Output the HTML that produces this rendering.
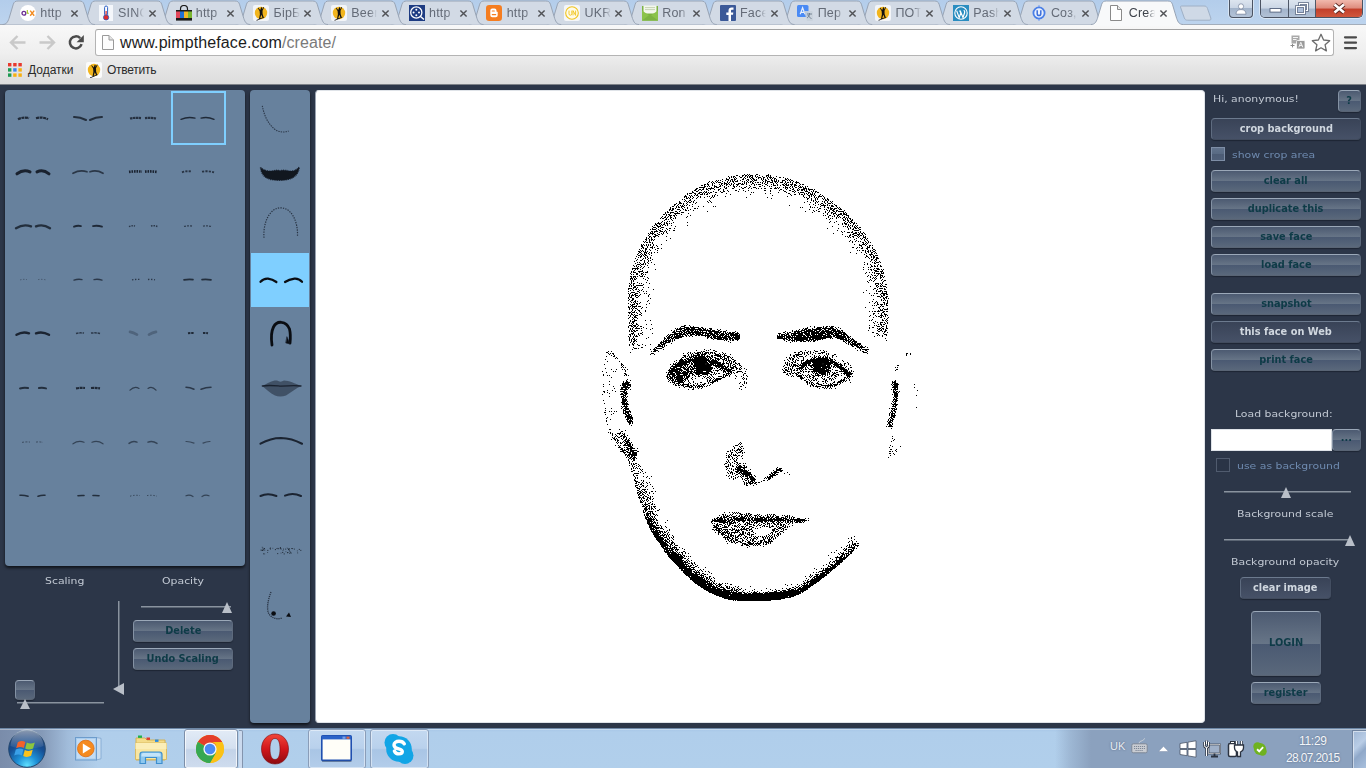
<!DOCTYPE html>
<html lang="en">
<head>
<meta charset="utf-8">
<title>Create</title>
<style>
*{box-sizing:border-box;margin:0;padding:0}
html,body{width:1366px;height:768px;overflow:hidden;background:#2c3648}
body{position:relative;font-family:"Liberation Sans","DejaVu Sans",sans-serif;font-size:12px;color:#222}
.abs{position:absolute}
/* ---------- chrome window ---------- */
#tabstrip{position:absolute;left:0;top:0;width:1366px;height:25px;background:linear-gradient(#b3cdeb,#bdd4ee)}
#toolbar{position:absolute;left:0;top:24px;width:1366px;height:61px;background:linear-gradient(#f8f8f8 0,#efefef 28px,#e4e4e4 44px,#dcdcdc 60px);border-top:1px solid #a3adba;border-bottom:1px solid #7d8187}
.tt{position:absolute;top:6px;font-size:12.500px;white-space:nowrap;width:26px;overflow:hidden;letter-spacing:.2px;-webkit-mask-image:linear-gradient(90deg,#000 70%,transparent 100%);mask-image:linear-gradient(90deg,#000 70%,transparent 100%)}
#omni{position:absolute;left:95px;top:29px;width:1239px;height:27px;background:#fff;border:1px solid #b4b4b4;border-top-color:#a2a2a2;border-radius:3px}
#url{position:absolute;left:120px;top:34px;font-size:16px;color:#1c1c1c;letter-spacing:.1px;white-space:nowrap}
#url span{color:#7a7a7a}
.bm{position:absolute;top:63px;font-size:12px;color:#2a2a2a;white-space:nowrap}
/* ---------- page ---------- */
#page{position:absolute;left:0;top:85px;width:1366px;height:643px;background:#2c3648}
.panel{position:absolute;background:#67819d;border-radius:4px;box-shadow:0 2px 3px rgba(0,0,0,.65)}
#canvas{position:absolute;left:315px;top:5px;width:890px;height:633px;background:#fff;border-radius:4px;border:1px solid #dfe3e8;border-left-color:#9aa3b1}
.pf{font-family:"DejaVu Sans","Liberation Sans",sans-serif}
.btn{position:absolute;height:22px;border-radius:4px;border:1px solid;border-color:#9ba8b8 #5d6a7d #596474 #8492a4;background:linear-gradient(#4c5a71 0,#677587 50%,#4a5972 50%,#5a687b 100%);box-shadow:0 1px 1px rgba(20,26,38,.6);font-family:"DejaVu Sans","Liberation Sans",sans-serif;font-weight:bold;font-size:11px;line-height:20px;text-align:center;color:#0e3b47;white-space:nowrap}
.btn span{display:inline-block;transform:scaleX(.89)}
.btn.lt{color:#d0d7df;background:linear-gradient(#394357,#465167);border-color:#6c7a8e #434e61 #414b5d #5f6c80}
.lbl{position:absolute;font-family:"DejaVu Sans","Liberation Sans",sans-serif;font-size:9.5px;color:#c3cad4;white-space:nowrap;transform-origin:0 50%;transform:scaleX(1.145)}
.lbl.dim{color:#6f8bb0}
.sl{position:absolute;height:2px;background:#8a939f;border-bottom:1px solid #5b6573}
.tri{position:absolute;width:0;height:0;border-left:5px solid transparent;border-right:5px solid transparent;border-bottom:11px solid #b9bfc8}

.cb1{width:14px;height:14px;border:1px solid #7e8ea6;background:linear-gradient(#62738c 0,#586a83 49%,#4c5c75 50%,#4f5f78 100%)}
.cb2{width:14px;height:14px;border:1px solid #505b6e;background:#2a3446}
.tril{position:absolute;width:0;height:0;border-top:6px solid transparent;border-bottom:6px solid transparent;border-right:11px solid #b9bfc8}
.sl.v{border-bottom:none;border-right:1px solid #5b6573;width:3px}
/* ---------- taskbar ---------- */
#taskbar{position:absolute;left:0;top:728px;width:1366px;height:40px;background:linear-gradient(#a6c5e6 0,#b0ceeb 3px,#b1cfeb 100%);border-top:1px solid #6d87a6}
.tray{position:absolute;color:#f3f6fa;white-space:nowrap;text-shadow:0 0 2px rgba(40,55,80,.55)}
</style>
</head>
<body>
<div id="tabstrip"></div>
<div id="toolbar"></div>
<svg class="abs" style="left:0;top:0" width="1366" height="26" viewBox="0 0 1366 26"><path d="M1181.500,6 L1204,6 C1206,6 1206.800,6.700 1207.500,8.500 L1210.800,18 C1211.300,19.700 1210.500,20.200 1209,20.200 L1187.500,20.200 C1186,20.200 1185,19.700 1184.300,17.900 L1180.800,8 C1180.300,6.500 1180.500,6 1181.500,6Z" fill="#cfd9e6" stroke="#9fb0c6" stroke-width="1"/><path d="M1013.1,24.5 C1017.1,24.5 1018.3,22 1019.6,18.5 L1023.9,4.2 C1024.7,1.8 1026.1,1 1028.6,1 L1089.9,1 C1092.4,1 1093.8,1.8 1094.6,4.2 L1098.9,18.5 C1100.2,22 1101.4,24.5 1105.4,24.5" fill="#d2dae5" stroke="#98a4b5" stroke-width="1"/><path d="M935.4,24.5 C939.4,24.5 940.6,22 941.9,18.5 L946.2,4.2 C947.0,1.8 948.4,1 950.9,1 L1012.2,1 C1014.7,1 1016.1,1.8 1016.9,4.2 L1021.2,18.5 C1022.5,22 1023.7,24.5 1027.7,24.5" fill="#d2dae5" stroke="#98a4b5" stroke-width="1"/><path d="M857.6,24.5 C861.6,24.5 862.8,22 864.1,18.5 L868.4,4.2 C869.2,1.8 870.6,1 873.1,1 L934.4,1 C936.9,1 938.3,1.8 939.1,4.2 L943.4,18.5 C944.7,22 945.9,24.5 949.9,24.5" fill="#d2dae5" stroke="#98a4b5" stroke-width="1"/><path d="M779.9,24.5 C783.9,24.5 785.1,22 786.4,18.5 L790.7,4.2 C791.5,1.8 792.9,1 795.4,1 L856.7,1 C859.2,1 860.6,1.8 861.4,4.2 L865.7,18.5 C867.0,22 868.2,24.5 872.2,24.5" fill="#d2dae5" stroke="#98a4b5" stroke-width="1"/><path d="M702.2,24.5 C706.2,24.5 707.4,22 708.7,18.5 L713.0,4.2 C713.8,1.8 715.2,1 717.7,1 L779.0,1 C781.5,1 782.9,1.8 783.7,4.2 L788.0,18.5 C789.3,22 790.5,24.5 794.5,24.5" fill="#d2dae5" stroke="#98a4b5" stroke-width="1"/><path d="M624.4,24.5 C628.4,24.5 629.6,22 630.9,18.5 L635.2,4.2 C636.0,1.8 637.4,1 639.9,1 L701.2,1 C703.7,1 705.1,1.8 705.9,4.2 L710.2,18.5 C711.5,22 712.7,24.5 716.7,24.5" fill="#d2dae5" stroke="#98a4b5" stroke-width="1"/><path d="M546.7,24.5 C550.7,24.5 551.9,22 553.2,18.5 L557.5,4.2 C558.3,1.8 559.7,1 562.2,1 L623.5,1 C626.0,1 627.4,1.8 628.2,4.2 L632.5,18.5 C633.8,22 635.0,24.5 639.0,24.5" fill="#d2dae5" stroke="#98a4b5" stroke-width="1"/><path d="M468.9,24.5 C472.9,24.5 474.1,22 475.4,18.5 L479.7,4.2 C480.5,1.8 481.9,1 484.4,1 L545.7,1 C548.2,1 549.6,1.8 550.4,4.2 L554.7,18.5 C556.0,22 557.2,24.5 561.2,24.5" fill="#d2dae5" stroke="#98a4b5" stroke-width="1"/><path d="M391.2,24.5 C395.2,24.5 396.4,22 397.7,18.5 L402.0,4.2 C402.8,1.8 404.2,1 406.7,1 L468.0,1 C470.5,1 471.9,1.8 472.7,4.2 L477.0,18.5 C478.3,22 479.5,24.5 483.5,24.5" fill="#d2dae5" stroke="#98a4b5" stroke-width="1"/><path d="M313.5,24.5 C317.5,24.5 318.7,22 320.0,18.5 L324.3,4.2 C325.1,1.8 326.5,1 329.0,1 L390.3,1 C392.8,1 394.2,1.8 395.0,4.2 L399.3,18.5 C400.6,22 401.8,24.5 405.8,24.5" fill="#d2dae5" stroke="#98a4b5" stroke-width="1"/><path d="M235.7,24.5 C239.7,24.5 240.9,22 242.2,18.5 L246.5,4.2 C247.3,1.8 248.7,1 251.2,1 L312.5,1 C315.0,1 316.4,1.8 317.2,4.2 L321.5,18.5 C322.8,22 324.0,24.5 328.0,24.5" fill="#d2dae5" stroke="#98a4b5" stroke-width="1"/><path d="M158.0,24.5 C162.0,24.5 163.2,22 164.5,18.5 L168.8,4.2 C169.6,1.8 171.0,1 173.5,1 L234.8,1 C237.3,1 238.7,1.8 239.5,4.2 L243.8,18.5 C245.1,22 246.3,24.5 250.3,24.5" fill="#d2dae5" stroke="#98a4b5" stroke-width="1"/><path d="M80.2,24.5 C84.2,24.5 85.4,22 86.7,18.5 L91.0,4.2 C91.8,1.8 93.2,1 95.7,1 L157.0,1 C159.5,1 160.9,1.8 161.7,4.2 L166.0,18.5 C167.3,22 168.5,24.5 172.5,24.5" fill="#d2dae5" stroke="#98a4b5" stroke-width="1"/><path d="M2.5,24.5 C6.5,24.5 7.7,22 9.0,18.5 L13.3,4.2 C14.1,1.8 15.5,1 18.0,1 L79.3,1 C81.8,1 83.2,1.8 84.0,4.2 L88.3,18.5 C89.6,22 90.8,24.5 94.8,24.5" fill="#d2dae5" stroke="#98a4b5" stroke-width="1"/><path d="M1090.9,24.5 C1094.9,24.5 1096.1,22 1097.4,18.5 L1101.7,4.2 C1102.5,1.8 1103.9,1 1106.4,1 L1167.7,1 C1170.2,1 1171.6,1.8 1172.4,4.2 L1176.7,18.5 C1178.0,22 1179.2,24.5 1183.2,24.5 L1183.2,26 L1090.9,26Z" fill="#f8f9fa" stroke="none"/><path d="M1090.9,24.5 C1094.9,24.5 1096.1,22 1097.4,18.5 L1101.7,4.2 C1102.5,1.8 1103.9,1 1106.4,1 L1167.7,1 C1170.2,1 1171.6,1.8 1172.4,4.2 L1176.7,18.5 C1178.0,22 1179.2,24.5 1183.2,24.5" fill="none" stroke="#98a4b5" stroke-width="1"/></svg>
<svg class="abs" style="left:20.0px;top:5px" width="16" height="16" viewBox="0 0 16 16"><circle cx="8" cy="8" r="8" fill="#fff"/><circle cx="3.9" cy="8.3" r="1.9" fill="none" stroke="#6a2c91" stroke-width="1.3"/><path d="M7.3 5v3.2h1.6" fill="none" stroke="#a5c51b" stroke-width="1.1"/><path d="M10.2 5.6l4 5.2M14.2 5.6l-4 5.2" stroke="#f28b20" stroke-width="1.4"/></svg>
<div class="tt" style="left:40.3px;color:#646b77">http</div>
<svg class="abs" style="left:70.1px;top:9px" width="9" height="9" viewBox="0 0 9 9"><path d="M1.400 1.400l6.200 6.200M7.600 1.400l-6.200 6.200" stroke="#505256" stroke-width="1.450"/></svg>
<svg class="abs" style="left:97.7px;top:5px" width="16" height="16" viewBox="0 0 16 16"><rect x="1" y="0" width="14" height="16" fill="#f4f7fb"/><rect x="6.6" y="1" width="3" height="10" rx="1.5" fill="#fff" stroke="#2a5fc4" stroke-width="1"/><rect x="7.5" y="6" width="1.2" height="6" fill="#e02a2a"/><circle cx="8.1" cy="12.4" r="2.6" fill="#e02a2a" stroke="#2a5fc4" stroke-width=".8"/></svg>
<div class="tt" style="left:118.0px;color:#646b77">SINO</div>
<svg class="abs" style="left:147.8px;top:9px" width="9" height="9" viewBox="0 0 9 9"><path d="M1.400 1.400l6.200 6.200M7.600 1.400l-6.200 6.200" stroke="#505256" stroke-width="1.450"/></svg>
<svg class="abs" style="left:175.5px;top:5px" width="16" height="16" viewBox="0 0 16 16"><path d="M4.5 5.5v-1.5a3.5 3.5 0 0 1 7 0v1.5" fill="none" stroke="#1b1b1b" stroke-width="1.2"/><rect x="0" y="5" width="16" height="2" fill="#1b1b1b"/><rect x="0" y="6.5" width="4" height="7" fill="#e2475b"/><rect x="4" y="6.5" width="4" height="7" fill="#1f6fd6"/><rect x="8" y="6.5" width="4" height="7" fill="#f0b626"/><rect x="12" y="6.5" width="4" height="7" fill="#79b530"/><rect x="0" y="13" width="16" height="2.6" fill="#1b1b1b"/></svg>
<div class="tt" style="left:195.8px;color:#646b77">http</div>
<svg class="abs" style="left:225.6px;top:9px" width="9" height="9" viewBox="0 0 9 9"><path d="M1.400 1.400l6.200 6.200M7.600 1.400l-6.200 6.200" stroke="#505256" stroke-width="1.450"/></svg>
<svg class="abs" style="left:253.2px;top:5px" width="16" height="16" viewBox="0 0 16 16"><rect x="0" y="0" width="16" height="16" rx="2" fill="#f3f5f8"/><circle cx="8" cy="8" r="6.2" fill="#f2b51d"/><path d="M8.2 2.2l1 .2-.2 2.2 1.6-2.6.6.3-1.7 3.4.1 3.2 1.2 3.6-1 .4-1.5-3.2-1.1 3.6 3.9-1.4.2.6-7.6 3.2-.3-.6 2.6-1.2.9-4.6-.3-3.2-1.9-3 .6-.4 1.9 2.4z" fill="#111"/></svg>
<div class="tt" style="left:273.5px;color:#646b77">БірБ</div>
<svg class="abs" style="left:303.3px;top:9px" width="9" height="9" viewBox="0 0 9 9"><path d="M1.400 1.400l6.200 6.200M7.600 1.400l-6.200 6.200" stroke="#505256" stroke-width="1.450"/></svg>
<svg class="abs" style="left:331.0px;top:5px" width="16" height="16" viewBox="0 0 16 16"><rect x="0" y="0" width="16" height="16" rx="2" fill="#f3f5f8"/><circle cx="8" cy="8" r="6.2" fill="#f2b51d"/><path d="M8.2 2.2l1 .2-.2 2.2 1.6-2.6.6.3-1.7 3.4.1 3.2 1.2 3.6-1 .4-1.5-3.2-1.1 3.6 3.9-1.4.2.6-7.6 3.2-.3-.6 2.6-1.2.9-4.6-.3-3.2-1.9-3 .6-.4 1.9 2.4z" fill="#111"/></svg>
<div class="tt" style="left:351.3px;color:#646b77">Beer</div>
<svg class="abs" style="left:381.1px;top:9px" width="9" height="9" viewBox="0 0 9 9"><path d="M1.400 1.400l6.200 6.200M7.600 1.400l-6.200 6.200" stroke="#505256" stroke-width="1.450"/></svg>
<svg class="abs" style="left:408.7px;top:5px" width="16" height="16" viewBox="0 0 16 16"><rect x="0" y="0" width="16" height="16" fill="#1d3b82"/><circle cx="7.3" cy="7.5" r="5.6" fill="none" stroke="#fff" stroke-width="1.3"/><circle cx="7.3" cy="4.8" r="1" fill="#fff"/><circle cx="7.3" cy="10.2" r="1" fill="#fff"/><circle cx="4.6" cy="7.5" r="1" fill="#fff"/><circle cx="10" cy="7.5" r="1" fill="#fff"/><path d="M11.5 11.5l3.5 3" stroke="#fff" stroke-width="1.4"/></svg>
<div class="tt" style="left:429.0px;color:#646b77">http</div>
<svg class="abs" style="left:458.8px;top:9px" width="9" height="9" viewBox="0 0 9 9"><path d="M1.400 1.400l6.200 6.200M7.600 1.400l-6.200 6.200" stroke="#505256" stroke-width="1.450"/></svg>
<svg class="abs" style="left:486.4px;top:5px" width="16" height="16" viewBox="0 0 16 16"><rect x="0" y="0" width="16" height="16" rx="3.2" fill="#f57d20"/><path d="M4.3 5.6a2 2 0 0 1 2-2h2.2a2 2 0 0 1 2 2v.9l1.2.5v3.2a2 2 0 0 1-2 2H6.3a2 2 0 0 1-2-2z" fill="#fff"/><path d="M6.3 6h2M6.3 9.6h3.4" stroke="#f57d20" stroke-width="1.2" stroke-linecap="round"/></svg>
<div class="tt" style="left:506.7px;color:#646b77">http</div>
<svg class="abs" style="left:536.5px;top:9px" width="9" height="9" viewBox="0 0 9 9"><path d="M1.400 1.400l6.200 6.200M7.600 1.400l-6.200 6.200" stroke="#505256" stroke-width="1.450"/></svg>
<svg class="abs" style="left:564.2px;top:5px" width="16" height="16" viewBox="0 0 16 16"><rect x="0" y="0" width="16" height="16" rx="2" fill="#f5f6f8"/><circle cx="8" cy="8" r="6.3" fill="#fffbe8" stroke="#f0c41e" stroke-width="1.1"/><path d="M5 5.6v3.2a1.4 1.4 0 0 0 2.8 0V5.6M9 10.4V5.6l2.6 4.8V5.6" fill="none" stroke="#f0c41e" stroke-width=".9"/></svg>
<div class="tt" style="left:584.5px;color:#646b77">UKR</div>
<svg class="abs" style="left:614.3px;top:9px" width="9" height="9" viewBox="0 0 9 9"><path d="M1.400 1.400l6.200 6.200M7.600 1.400l-6.200 6.200" stroke="#505256" stroke-width="1.450"/></svg>
<svg class="abs" style="left:641.9px;top:5px" width="16" height="16" viewBox="0 0 16 16"><rect x="0" y="1" width="16" height="14.5" fill="#7cb342"/><rect x="1.5" y="0.5" width="13" height="8" fill="#f3f7ec"/><path d="M3 2.6h10M3 4.6h10" stroke="#b9c8a5" stroke-width=".8"/><path d="M0 5.5l8 5.5 8-5.5v10H0z" fill="#8bc34a"/><path d="M0 15.5l8-6 8 6z" fill="#7cb342"/></svg>
<div class="tt" style="left:662.2px;color:#646b77">Ron</div>
<svg class="abs" style="left:692.0px;top:9px" width="9" height="9" viewBox="0 0 9 9"><path d="M1.400 1.400l6.200 6.200M7.600 1.400l-6.200 6.200" stroke="#505256" stroke-width="1.450"/></svg>
<svg class="abs" style="left:719.7px;top:5px" width="16" height="16" viewBox="0 0 16 16"><rect x="0" y="0" width="16" height="16" rx="1" fill="#3b5998"/><path d="M11 16V9.8h2l.3-2.4H11V5.9c0-.7.2-1.2 1.2-1.2h1.3V2.6c-.2 0-1-.1-1.9-.1-1.9 0-3.1 1.100-3.100 3.200v1.800H6.300v2.400h2.200V16z" fill="#fff"/></svg>
<div class="tt" style="left:740.0px;color:#646b77">Face</div>
<svg class="abs" style="left:769.8px;top:9px" width="9" height="9" viewBox="0 0 9 9"><path d="M1.400 1.400l6.200 6.200M7.600 1.400l-6.200 6.200" stroke="#505256" stroke-width="1.450"/></svg>
<svg class="abs" style="left:797.4px;top:5px" width="16" height="16" viewBox="0 0 16 16"><rect x="0" y="0" width="11.500" height="12" rx="1.500" fill="#4a8af4"/><path d="M3.200 9.200L5.600 2.800 8 9.200M4 7.300h3.200" fill="none" stroke="#e8f0fe" stroke-width="1.200"/><path d="M7 6h7.500a1.500 1.500 0 0 1 1.500 1.500V14.500a1.500 1.500 0 0 1-1.500 1.500H10z" fill="#c9d1dc" opacity=".9"/><path d="M10 9h5M12.500 8v1c0 2-1.500 3.500-2.500 4M11 10c.5 1.500 2 3 3.500 3.500" fill="none" stroke="#6c7a8c" stroke-width=".9"/></svg>
<div class="tt" style="left:817.7px;color:#646b77">Пер</div>
<svg class="abs" style="left:847.5px;top:9px" width="9" height="9" viewBox="0 0 9 9"><path d="M1.400 1.400l6.200 6.200M7.600 1.400l-6.200 6.200" stroke="#505256" stroke-width="1.450"/></svg>
<svg class="abs" style="left:875.1px;top:5px" width="16" height="16" viewBox="0 0 16 16"><rect x="0" y="0" width="16" height="16" rx="2" fill="#f3f5f8"/><circle cx="8" cy="8" r="6.2" fill="#f2b51d"/><path d="M8.2 2.2l1 .2-.2 2.2 1.6-2.6.6.3-1.7 3.4.1 3.2 1.2 3.6-1 .4-1.5-3.2-1.1 3.6 3.9-1.4.2.6-7.6 3.2-.3-.6 2.6-1.2.9-4.6-.3-3.2-1.9-3 .6-.4 1.9 2.4z" fill="#111"/></svg>
<div class="tt" style="left:895.4px;color:#646b77">ПОТ</div>
<svg class="abs" style="left:925.2px;top:9px" width="9" height="9" viewBox="0 0 9 9"><path d="M1.400 1.400l6.200 6.200M7.600 1.400l-6.200 6.200" stroke="#505256" stroke-width="1.450"/></svg>
<svg class="abs" style="left:952.9px;top:5px" width="16" height="16" viewBox="0 0 16 16"><rect x="0" y="0" width="16" height="16" fill="#2a8dc0"/><circle cx="8" cy="8" r="6.200" fill="none" stroke="#fff" stroke-width="1.100"/><path d="M3.600 5.600l2.600 7 1.600-4.600-1.200-2.600M7.200 5.600l2.800 7 1.600-4.800c.4-1.200-.2-2-.8-2.600" fill="none" stroke="#fff" stroke-width="1.200"/></svg>
<div class="tt" style="left:973.2px;color:#646b77">Pash</div>
<svg class="abs" style="left:1003.0px;top:9px" width="9" height="9" viewBox="0 0 9 9"><path d="M1.400 1.400l6.200 6.200M7.600 1.400l-6.200 6.200" stroke="#505256" stroke-width="1.450"/></svg>
<svg class="abs" style="left:1030.6px;top:5px" width="16" height="16" viewBox="0 0 16 16"><path d="M8 0v2M8 14v2" stroke="#8fb2f2" stroke-width="1.400"/><circle cx="8" cy="8" r="5.600" fill="#e9f0fd" stroke="#4a7fe6" stroke-width="1.800"/><path d="M6.200 5.200v3.600a1.800 1.800 0 0 0 3.600 0V5.200" fill="none" stroke="#3c6fdc" stroke-width="1.500"/></svg>
<div class="tt" style="left:1050.9px;color:#646b77">Соз,</div>
<svg class="abs" style="left:1080.7px;top:9px" width="9" height="9" viewBox="0 0 9 9"><path d="M1.400 1.400l6.200 6.200M7.600 1.400l-6.200 6.200" stroke="#505256" stroke-width="1.450"/></svg>
<svg class="abs" style="left:1108.4px;top:5px" width="16" height="16" viewBox="0 0 16 16"><path d="M2.500 .500h7l4 4v11h-11z" fill="#fff" stroke="#8a8a8a" stroke-width="1"/><path d="M9.500 .500v4h4" fill="#e9e9e9" stroke="#8a8a8a" stroke-width="1"/></svg>
<div class="tt" style="left:1128.7px;color:#3f444c">Crea</div>
<svg class="abs" style="left:1158.5px;top:9px" width="9" height="9" viewBox="0 0 9 9"><path d="M1.400 1.400l6.200 6.200M7.600 1.400l-6.200 6.200" stroke="#505256" stroke-width="1.450"/></svg>
<!-- toolbar icons -->
<svg class="abs" style="left:9px;top:34px" width="48" height="17" viewBox="0 0 48 17">
  <path d="M8.500 2L2 8.500 8.500 15M2.500 8.500H16.500" fill="none" stroke="#c9c9c9" stroke-width="2.400"/>
  <path d="M38.500 2L45 8.500 38.500 15M44.500 8.500H30.500" fill="none" stroke="#c9c9c9" stroke-width="2.400"/>
</svg>
<svg class="abs" style="left:67px;top:34px" width="18" height="17" viewBox="0 0 18 17">
  <path d="M13.200 4.200A6 6 0 1 0 14.600 10.200" fill="none" stroke="#4b4b4b" stroke-width="2.500"/>
  <path d="M16.800 1v7.200H9.600z" fill="#4b4b4b"/>
</svg>
<div id="omni"></div>
<svg class="abs" style="left:102px;top:35px" width="12" height="15" viewBox="0 0 12 15">
  <path d="M.500 .500h6.500l4.500 4.500v9.500h-11z" fill="#fdfdfd" stroke="#9a9a9a"/>
  <path d="M7 .500v4.500h4.500" fill="#e4e4e4" stroke="#9a9a9a"/>
</svg>
<div id="url">www.pimptheface.com<span>/create/</span></div>
<!-- translate icon -->
<svg class="abs" style="left:1290px;top:35px" width="16" height="15" viewBox="0 0 16 15">
  <rect x="1.500" y=".500" width="8" height="8" fill="#a9a9a9"/>
  <path d="M3 2.500h5M3 4.500h3.500" stroke="#f3f3f3" stroke-width="1"/>
  <rect x="6.500" y="5.500" width="8.500" height="8.500" rx="1" fill="#9a9a9a" stroke="#fff" stroke-width=".8"/>
  <path d="M8.800 12.300l2-5 2 5M9.600 10.600h2.400" fill="none" stroke="#f3f3f3" stroke-width="1"/>
  <path d="M.500 10.500h4M2.500 8.800v3.600" stroke="#8a8a8a" stroke-width="1"/>
</svg>
<!-- star -->
<svg class="abs" style="left:1311px;top:33px" width="20" height="19" viewBox="0 0 20 19">
  <path d="M10 1.300l2.600 5.700 6.100.7-4.600 4.100 1.300 6.100L10 14.800 4.600 17.900l1.300-6.100L1.300 7.700l6.100-.7z" fill="#fefefe" stroke="#6b6b6b" stroke-width="1.300" stroke-linejoin="round"/>
</svg>
<!-- hamburger -->
<svg class="abs" style="left:1343px;top:35px" width="15" height="15" viewBox="0 0 15 15">
  <path d="M2 2.300h11M2 7.700h11M2 13.100h11" stroke="#4a4a4a" stroke-width="2.200" stroke-linecap="round"/>
</svg>
<!-- bookmarks -->
<svg class="abs" style="left:8px;top:63px" width="14" height="14" viewBox="0 0 14 14">
  <rect x="0" y="0" width="3.400" height="3.400" fill="#e8392d"/><rect x="5.200" y="0" width="3.400" height="3.400" fill="#e8392d"/><rect x="10.400" y="0" width="3.400" height="3.400" fill="#e8392d"/>
  <rect x="0" y="5.200" width="3.400" height="3.400" fill="#1d9a51"/><rect x="5.200" y="5.200" width="3.400" height="3.400" fill="#3a84f0"/><rect x="10.400" y="5.200" width="3.400" height="3.400" fill="#f7b011"/>
  <rect x="0" y="10.400" width="3.400" height="3.400" fill="#1d9a51"/><rect x="5.200" y="10.400" width="3.400" height="3.400" fill="#f7b011"/><rect x="10.400" y="10.400" width="3.400" height="3.400" fill="#f7b011"/>
</svg>
<div class="bm" style="left:28px">Додатки</div>
<svg class="abs" style="left:86px;top:62px" width="16" height="16" viewBox="0 0 16 16"><rect x="0" y="0" width="16" height="16" rx="2" fill="#fbfbfb"/><circle cx="8" cy="8" r="6.200" fill="#f2b51d"/><path d="M8.700 2.700l1 .2-.2 2.200 1.600-2.600.6.300-1.700 3.400.1 3.200 1.200 3.600-1 .4-1.500-3.200-1.100 3.600 3.900-1.400.2.600-7.600 3.200-.3-.6 2.600-1.200.9-4.600-.3-3.200-1.900-3 .6-.4 1.900 2.400z" fill="#111"/></svg>
<div class="bm" style="left:107px;letter-spacing:-.25px">Ответить</div>
<!-- window controls -->
<div class="abs" style="left:1229px;top:0;width:24px;height:18px;border:1px solid #4b5362;border-top:none;border-radius:0 0 4px 4px;background:linear-gradient(#dde5ef 0,#cbd6e5 45%,#a3b4cb 50%,#b4c3d7 100%);box-shadow:0 0 0 1px rgba(255,255,255,.45)"></div>
<svg class="abs" style="left:1235px;top:3px" width="12" height="12" viewBox="0 0 12 12"><circle cx="6" cy="3.400" r="2.600" fill="#fff" stroke="#5a6a86" stroke-width=".6"/><path d="M1 11.200c0-3.400 2-4.600 5-4.600s5 1.200 5 4.600z" fill="#fff" stroke="#5a6a86" stroke-width=".6"/></svg>
<div class="abs" style="left:1260px;top:0;width:103px;height:18px;border:1px solid #4b5362;border-top:none;border-radius:0 0 5px 5px;overflow:hidden;box-shadow:0 0 0 1px rgba(255,255,255,.45)">
  <div class="abs" style="left:0;top:0;width:28px;height:18px;background:linear-gradient(#dde5ef 0,#cbd6e5 45%,#a3b4cb 50%,#b4c3d7 100%);border-right:1px solid #4f5868"></div>
  <div class="abs" style="left:28px;top:0;width:27px;height:18px;background:linear-gradient(#dde5ef 0,#cbd6e5 45%,#a3b4cb 50%,#b4c3d7 100%);border-right:1px solid #4f5868"></div>
  <div class="abs" style="left:55px;top:0;width:48px;height:18px;background:linear-gradient(#f1b9ad 0,#de8c7d 45%,#c23f2a 50%,#d25a3e 100%)"></div>
</div>
<svg class="abs" style="left:1260px;top:0" width="102" height="18" viewBox="0 0 102 18">
  <rect x="10" y="8.500" width="11" height="3.600" fill="#fff" stroke="#53617c" stroke-width=".9"/>
  <rect x="39.500" y="3.500" width="8" height="7" fill="none" stroke="#53617c" stroke-width="2.600"/><rect x="39.500" y="3.500" width="8" height="7" fill="none" stroke="#fff" stroke-width="1.200"/>
  <rect x="36.500" y="6.500" width="8" height="7" fill="#aebfd9" stroke="#53617c" stroke-width="2.600"/><rect x="36.500" y="6.500" width="8" height="7" fill="none" stroke="#fff" stroke-width="1.200"/>
  <path d="M74.500 4.500l9.500 8M84 4.500l-9.500 8" stroke="#5d2a22" stroke-width="4.400"/><path d="M74.500 4.500l9.500 8M84 4.500l-9.500 8" stroke="#fff" stroke-width="2.600"/>
</svg>

<div id="page">
  <div class="panel" id="left" style="left:5px;top:5px;width:240px;height:476px"></div>
  <div class="panel" id="cats" style="left:250px;top:5px;width:60px;height:633px"></div>
  <div class="abs" style="left:171px;top:6px;width:55px;height:54px;border:2px solid #7fcfff"></div>
  <div class="abs" style="left:251px;top:168px;width:58px;height:54px;background:#7fcfff"></div>
  <div id="canvas"></div>
<svg class="abs" style="left:0;top:0" width="320" height="640" viewBox="0 85 320 640" fill="none" stroke="#131a26" stroke-linecap="round">
<path d="M18.0,119.3 Q23.5,116.5 29.0,118.2" stroke-width="2.2" stroke-opacity="0.85" stroke-dasharray="3 .6" stroke-linecap="butt"/>
<path d="M36.0,118.2 Q42.0,116.5 48.0,119.3" stroke-width="2.2" stroke-opacity="0.85" stroke-dasharray="3 .6" stroke-linecap="butt"/>
<path d="M74.0,117.1 Q80.0,117.0 86.0,120.0" stroke-width="2" stroke-opacity="0.8"/>
<path d="M90.0,120.0 Q96.0,117.0 102.0,117.1" stroke-width="2" stroke-opacity="0.8"/>
<path d="M130.0,118.5 Q135.5,117.4 141.0,118.1" stroke-width="2.1" stroke-opacity="0.78" stroke-dasharray="2.5 .5" stroke-linecap="butt"/>
<path d="M145.0,118.1 Q150.5,117.4 156.0,118.5" stroke-width="2.1" stroke-opacity="0.78" stroke-dasharray="2.5 .5" stroke-linecap="butt"/>
<path d="M181.0,119.4 Q188.0,116.4 195.0,118.2" stroke-width="1.3" stroke-opacity="0.85"/>
<path d="M201.0,118.2 Q207.5,116.4 214.0,119.4" stroke-width="1.3" stroke-opacity="0.85"/>
<path d="M17.0,173.8 Q23.5,168.9 30.0,171.9" stroke-width="3" stroke-opacity="0.92"/>
<path d="M37.0,171.9 Q43.0,168.9 49.0,173.8" stroke-width="3" stroke-opacity="0.92"/>
<path d="M73.0,173.3 Q80.0,169.5 87.0,171.8" stroke-width="1.7" stroke-opacity="0.72"/>
<path d="M90.0,171.8 Q96.5,169.5 103.0,173.3" stroke-width="1.7" stroke-opacity="0.72"/>
<path d="M129.0,171.9 Q135.5,171.1 142.0,171.6" stroke-width="2.6" stroke-opacity="0.9" stroke-dasharray="1.6 .9" stroke-linecap="butt"/>
<path d="M145.0,171.6 Q151.0,171.1 157.0,171.9" stroke-width="2.6" stroke-opacity="0.9" stroke-dasharray="1.6 .9" stroke-linecap="butt"/>
<path d="M182.0,172.4 Q187.0,170.5 192.0,171.7" stroke-width="1.8" stroke-opacity="0.75" stroke-dasharray="2.2 1.2" stroke-linecap="butt"/>
<path d="M202.0,171.7 Q208.0,170.5 214.0,172.4" stroke-width="1.8" stroke-opacity="0.75" stroke-dasharray="2.2 1.2" stroke-linecap="butt"/>
<path d="M16.0,228.2 Q23.5,223.6 31.0,226.4" stroke-width="2.4" stroke-opacity="0.8"/>
<path d="M36.0,226.4 Q43.0,223.6 50.0,228.2" stroke-width="2.4" stroke-opacity="0.8"/>
<path d="M74.0,226.7 Q77.5,225.2 81.0,226.1" stroke-width="1.8" stroke-opacity="0.85"/>
<path d="M93.0,226.1 Q97.5,225.2 102.0,226.7" stroke-width="1.8" stroke-opacity="0.85"/>
<path d="M129.0,226.7 Q132.0,225.2 135.0,226.1" stroke-width="1.5" stroke-opacity="0.7" stroke-dasharray="1.5 1" stroke-linecap="butt"/>
<path d="M151.0,226.1 Q154.5,225.2 158.0,226.7" stroke-width="1.5" stroke-opacity="0.7" stroke-dasharray="1.5 1" stroke-linecap="butt"/>
<path d="M184.0,226.4 Q188.5,225.5 193.0,226.1" stroke-width="1.3" stroke-opacity="0.62" stroke-dasharray="2 1" stroke-linecap="butt"/>
<path d="M203.0,226.1 Q207.0,225.5 211.0,226.4" stroke-width="1.3" stroke-opacity="0.62" stroke-dasharray="2 1" stroke-linecap="butt"/>
<path d="M20.0,279.9 Q23.5,279.0 27.0,279.6" stroke-width="1" stroke-opacity="0.35" stroke-dasharray="1.5 1.5" stroke-linecap="butt"/>
<path d="M38.0,279.6 Q42.0,279.0 46.0,279.9" stroke-width="1" stroke-opacity="0.35" stroke-dasharray="1.5 1.5" stroke-linecap="butt"/>
<path d="M74.0,280.2 Q78.0,278.7 82.0,279.6" stroke-width="1.3" stroke-opacity="0.7"/>
<path d="M94.0,279.6 Q98.0,278.7 102.0,280.2" stroke-width="1.3" stroke-opacity="0.7"/>
<path d="M132.0,279.8 Q136.0,279.2 140.0,279.5" stroke-width="1.3" stroke-opacity="0.7" stroke-dasharray="1.4 1.6" stroke-linecap="butt"/>
<path d="M148.0,279.5 Q151.5,279.2 155.0,279.8" stroke-width="1.3" stroke-opacity="0.7" stroke-dasharray="1.4 1.6" stroke-linecap="butt"/>
<path d="M184.0,279.9 Q188.5,279.1 193.0,279.6" stroke-width="1.6" stroke-opacity="0.8"/>
<path d="M202.0,279.6 Q206.5,279.1 211.0,279.9" stroke-width="1.6" stroke-opacity="0.8"/>
<path d="M16.5,334.8 Q22.8,331.0 29.0,333.3" stroke-width="2.4" stroke-opacity="0.9"/>
<path d="M36.0,333.3 Q42.5,331.0 49.0,334.8" stroke-width="2.4" stroke-opacity="0.9"/>
<path d="M76.0,333.4 Q80.0,332.5 84.0,333.1" stroke-width="1.5" stroke-opacity="0.7" stroke-dasharray="2.5 .8" stroke-linecap="butt"/>
<path d="M91.0,333.1 Q95.5,332.5 100.0,333.4" stroke-width="1.5" stroke-opacity="0.7" stroke-dasharray="2.5 .8" stroke-linecap="butt"/>
<path d="M130.0,331.9 Q133.5,332.5 137.0,334.6" stroke-width="2.6" stroke-opacity="0.28"/>
<path d="M149.0,334.6 Q152.5,332.5 156.0,331.9" stroke-width="2.6" stroke-opacity="0.28"/>
<path d="M188.0,333.2 Q191.0,332.8 194.0,333.0" stroke-width="2" stroke-opacity="0.85" stroke-dasharray="2.4 .8" stroke-linecap="butt"/>
<path d="M203.0,333.0 Q205.5,332.8 208.0,333.2" stroke-width="2" stroke-opacity="0.85" stroke-dasharray="2.4 .8" stroke-linecap="butt"/>
<path d="M20.0,388.4 Q24.0,387.5 28.0,388.1" stroke-width="2" stroke-opacity="0.8"/>
<path d="M39.0,388.1 Q42.5,387.5 46.0,388.4" stroke-width="2" stroke-opacity="0.8"/>
<path d="M76.0,388.3 Q80.5,387.7 85.0,388.0" stroke-width="2.2" stroke-opacity="0.85" stroke-dasharray="3 .6" stroke-linecap="butt"/>
<path d="M91.0,388.0 Q95.5,387.7 100.0,388.3" stroke-width="2.2" stroke-opacity="0.85" stroke-dasharray="3 .6" stroke-linecap="butt"/>
<path d="M130.0,390.2 Q134.5,385.6 139.0,388.4" stroke-width="1.2" stroke-opacity="0.65"/>
<path d="M148.0,388.4 Q152.0,385.6 156.0,390.2" stroke-width="1.2" stroke-opacity="0.65"/>
<path d="M186.0,387.3 Q190.0,387.4 194.0,389.3" stroke-width="1.5" stroke-opacity="0.7"/>
<path d="M201.0,389.3 Q206.0,387.4 211.0,387.3" stroke-width="1.5" stroke-opacity="0.7"/>
<path d="M22.0,442.4 Q26.0,441.6 30.0,442.1" stroke-width="1" stroke-opacity="0.5" stroke-dasharray="2 1.4" stroke-linecap="butt"/>
<path d="M36.0,442.1 Q39.5,441.6 43.0,442.4" stroke-width="1" stroke-opacity="0.5" stroke-dasharray="2 1.4" stroke-linecap="butt"/>
<path d="M73.0,443.8 Q78.5,440.0 84.0,442.3" stroke-width="1.2" stroke-opacity="0.6"/>
<path d="M92.0,442.3 Q97.5,440.0 103.0,443.8" stroke-width="1.2" stroke-opacity="0.6"/>
<path d="M129.0,443.4 Q133.0,440.4 137.0,442.2" stroke-width="1.4" stroke-opacity="0.6"/>
<path d="M148.0,442.2 Q152.5,440.4 157.0,443.4" stroke-width="1.4" stroke-opacity="0.6"/>
<path d="M186.0,441.5 Q190.0,441.4 194.0,443.1" stroke-width="1.2" stroke-opacity="0.55"/>
<path d="M203.0,443.1 Q206.5,441.4 210.0,441.5" stroke-width="1.2" stroke-opacity="0.55"/>
<path d="M20.0,495.3 Q24.0,495.0 28.0,496.2" stroke-width="1.6" stroke-opacity="0.8"/>
<path d="M38.0,496.2 Q41.5,495.0 45.0,495.3" stroke-width="1.6" stroke-opacity="0.8"/>
<path d="M78.0,495.7 Q81.0,495.3 84.0,495.5" stroke-width="1.6" stroke-opacity="0.8"/>
<path d="M93.0,495.5 Q96.0,495.3 99.0,495.7" stroke-width="1.6" stroke-opacity="0.8"/>
<path d="M130.0,496.2 Q135.0,494.7 140.0,495.6" stroke-width="1" stroke-opacity="0.6" stroke-dasharray="1.4 1.8" stroke-linecap="butt"/>
<path d="M147.0,495.6 Q152.0,494.7 157.0,496.2" stroke-width="1" stroke-opacity="0.6" stroke-dasharray="1.4 1.8" stroke-linecap="butt"/>
<path d="M186.0,495.8 Q189.5,494.3 193.0,496.5" stroke-width="1.2" stroke-opacity="0.6"/>
<path d="M202.0,496.5 Q205.5,494.3 209.0,495.8" stroke-width="1.2" stroke-opacity="0.6"/>
<path d="M262.300,105.800 C264,115 268,125 276.400,130.400 C281,132.500 285,132.300 288.700,131" stroke-width="1.100" stroke-opacity=".7" stroke-dasharray="1.400 1" stroke-linecap="butt"/>
<path d="M260.500,167.500 C264,170.500 268,171.500 272,171 C275,170.300 278,170 280,170.800 C283,170 286,170.300 289,171 C293,171.500 296,170.500 299.200,167.200 C299,172 296,176.500 291,178.500 C287,180 283,180.300 280,180.300 C276,180.300 272,180 268,178.500 C263,176.500 261,172 260.500,167.500Z" fill="#0b0f16" fill-opacity=".93" stroke-width="1.400" stroke-dasharray="1 .8" stroke-linecap="butt" stroke-opacity=".85"/>
<path d="M264,237.700 C263,225 268,209 280,207.800 C292,207.500 298,222 297.500,236" stroke-width="1.200" stroke-opacity=".75" stroke-dasharray="1.300 1.200" stroke-linecap="butt"/>
<path d="M260.500,281.800 C262.500,279.500 265,278.400 268,278.600 C271,279 274,280.300 276.400,282" stroke="#0a0d12" stroke-width="2.200"/>
<path d="M302,281.800 C300,279.500 297.500,278.400 294.500,278.600 C291.500,279 287.500,280.300 285,282" stroke="#0a0d12" stroke-width="2.200"/>
<path d="M272,345 C271,338 271.500,331 273.500,327 C275.500,323 279,322 281.500,322.300 C285,322.600 288,325 289.500,329 C290.500,333 290.500,338 290,343" stroke="#0a0d12" stroke-width="2.800"/>
<path d="M287,337 l3,7 l-4,-1z" fill="#0a0d12" stroke-width=".6"/>
<path d="M262.300,386 C268,383 273,380 277,380.500 C279.500,382 281.500,382 284,380.500 C289,380.500 295,383.500 301,386 C296,388 291,392.500 286,395.500 C282,397 278,396.800 275,395.500 C270,393 266,389 262.300,386Z" fill="#1a2230" fill-opacity=".5" stroke="none"/>
<path d="M262.300,386 C270,384.800 276,385.800 281,386.200 C288,385.600 295,385 301,386" stroke-width="1.300" stroke-opacity=".85"/>
<path d="M260.500,443.700 C268,439.500 275,438 281,438 C288,438.200 295,440 302,443.700" stroke-width="2.100" stroke-opacity=".9"/>
<path d="M260.500,496 C265,493.800 271,493.800 276.400,496 M285,495.600 C290,493.400 296,493.600 301,496" stroke-width="2" stroke-opacity=".9"/>
<rect x="269.9" y="547.2" width="1" height="1" fill="#10161f" fill-opacity="0.44" stroke="none"/><rect x="262.8" y="549.3" width="1" height="1" fill="#10161f" fill-opacity="0.79" stroke="none"/><rect x="292.1" y="548.1" width="1" height="1" fill="#10161f" fill-opacity="0.50" stroke="none"/><rect x="267.3" y="549.9" width="1" height="1" fill="#10161f" fill-opacity="0.81" stroke="none"/><rect x="293.9" y="548.6" width="1" height="1" fill="#10161f" fill-opacity="0.69" stroke="none"/><rect x="290.7" y="552.5" width="1" height="1" fill="#10161f" fill-opacity="0.40" stroke="none"/><rect x="285.4" y="551.2" width="1" height="1" fill="#10161f" fill-opacity="0.45" stroke="none"/><rect x="279.9" y="547.1" width="1" height="1" fill="#10161f" fill-opacity="0.83" stroke="none"/><rect x="283.0" y="548.6" width="1" height="1" fill="#10161f" fill-opacity="0.66" stroke="none"/><rect x="297.1" y="552.4" width="1" height="1" fill="#10161f" fill-opacity="0.58" stroke="none"/><rect x="285.2" y="548.6" width="1" height="1" fill="#10161f" fill-opacity="0.80" stroke="none"/><rect x="261.8" y="546.8" width="1" height="1" fill="#10161f" fill-opacity="0.50" stroke="none"/><rect x="282.5" y="550.0" width="1" height="1" fill="#10161f" fill-opacity="0.46" stroke="none"/><rect x="277.3" y="547.9" width="1" height="1" fill="#10161f" fill-opacity="0.50" stroke="none"/><rect x="274.9" y="549.1" width="1" height="1" fill="#10161f" fill-opacity="0.85" stroke="none"/><rect x="264.2" y="549.5" width="1" height="1" fill="#10161f" fill-opacity="0.69" stroke="none"/><rect x="270.0" y="548.9" width="1" height="1" fill="#10161f" fill-opacity="0.37" stroke="none"/><rect x="289.3" y="552.8" width="1" height="1" fill="#10161f" fill-opacity="0.75" stroke="none"/><rect x="300.3" y="549.9" width="1" height="1" fill="#10161f" fill-opacity="0.78" stroke="none"/><rect x="277.2" y="553.1" width="1" height="1" fill="#10161f" fill-opacity="0.80" stroke="none"/><rect x="272.3" y="547.8" width="1" height="1" fill="#10161f" fill-opacity="0.43" stroke="none"/><rect x="276.0" y="548.0" width="1" height="1" fill="#10161f" fill-opacity="0.37" stroke="none"/><rect x="267.1" y="552.0" width="1" height="1" fill="#10161f" fill-opacity="0.51" stroke="none"/><rect x="264.1" y="553.4" width="1" height="1" fill="#10161f" fill-opacity="0.46" stroke="none"/><rect x="262.5" y="549.4" width="1" height="1" fill="#10161f" fill-opacity="0.43" stroke="none"/><rect x="261.7" y="550.0" width="1" height="1" fill="#10161f" fill-opacity="0.42" stroke="none"/><rect x="282.2" y="551.9" width="1" height="1" fill="#10161f" fill-opacity="0.89" stroke="none"/><rect x="280.1" y="548.2" width="1" height="1" fill="#10161f" fill-opacity="0.37" stroke="none"/><rect x="277.7" y="548.2" width="1" height="1" fill="#10161f" fill-opacity="0.81" stroke="none"/><rect x="280.9" y="548.5" width="1" height="1" fill="#10161f" fill-opacity="0.46" stroke="none"/><rect x="269.7" y="548.1" width="1" height="1" fill="#10161f" fill-opacity="0.86" stroke="none"/><rect x="283.7" y="553.4" width="1" height="1" fill="#10161f" fill-opacity="0.85" stroke="none"/><rect x="287.5" y="552.0" width="1" height="1" fill="#10161f" fill-opacity="0.62" stroke="none"/><rect x="263.9" y="548.0" width="1" height="1" fill="#10161f" fill-opacity="0.84" stroke="none"/><rect x="298.8" y="548.9" width="1" height="1" fill="#10161f" fill-opacity="0.79" stroke="none"/><rect x="287.0" y="552.2" width="1" height="1" fill="#10161f" fill-opacity="0.71" stroke="none"/><rect x="288.8" y="548.4" width="1" height="1" fill="#10161f" fill-opacity="0.88" stroke="none"/><rect x="263.1" y="553.3" width="1" height="1" fill="#10161f" fill-opacity="0.72" stroke="none"/><rect x="261.9" y="549.9" width="1" height="1" fill="#10161f" fill-opacity="0.72" stroke="none"/><rect x="262.5" y="547.7" width="1" height="1" fill="#10161f" fill-opacity="0.66" stroke="none"/><rect x="291.4" y="548.0" width="1" height="1" fill="#10161f" fill-opacity="0.86" stroke="none"/><rect x="260.6" y="549.6" width="1" height="1" fill="#10161f" fill-opacity="0.78" stroke="none"/><rect x="296.9" y="550.4" width="1" height="1" fill="#10161f" fill-opacity="0.46" stroke="none"/><rect x="288.2" y="548.8" width="1" height="1" fill="#10161f" fill-opacity="0.78" stroke="none"/><rect x="279.8" y="548.1" width="1" height="1" fill="#10161f" fill-opacity="0.68" stroke="none"/><rect x="280.5" y="552.6" width="1" height="1" fill="#10161f" fill-opacity="0.43" stroke="none"/>
<path d="M287.500,548 l3.500,5" stroke-width="1" stroke-opacity=".6"/>
<path d="M271,592 C268,600 266.500,608 268.500,613 C271,618 277,620 282,618" stroke-width="1.300" stroke-opacity=".75" stroke-dasharray="1.200 .9" stroke-linecap="butt"/>
<circle cx="273.600" cy="613.500" r="2.300" fill="#0a0d12" stroke="none"/><path d="M286,616.500 l3,-4 l2,4.500z" fill="#0a0d12" stroke="none"/>
</svg>
<svg class="abs" style="left:590px;top:75px" width="340" height="450" viewBox="590 160 340 450">
<defs>
  <filter id="dith" x="590" y="160" width="340" height="450" filterUnits="userSpaceOnUse" color-interpolation-filters="sRGB">
    <feTurbulence type="fractalNoise" baseFrequency="0.95" numOctaves="1" seed="7" result="nz"/>
    <feColorMatrix in="nz" type="matrix" values="0 0 0 0 0  0 0 0 0 0  0 0 0 0 0  2.2 0 0 0 -0.6" result="n1"/>
    <feComposite in="SourceGraphic" in2="n1" operator="arithmetic" k1="0" k2="1" k3="1" k4="-0.52" result="sum"/>
    <feComponentTransfer in="sum"><feFuncA type="discrete" tableValues="0 1"/></feComponentTransfer>
  </filter>
  <filter id="b2" x="-20%" y="-20%" width="140%" height="140%"><feGaussianBlur stdDeviation="2"/></filter>
  <filter id="b3" x="-20%" y="-20%" width="140%" height="140%"><feGaussianBlur stdDeviation="3.5"/></filter>
  <filter id="b1" x="-20%" y="-20%" width="140%" height="140%"><feGaussianBlur stdDeviation="1.1"/></filter>
  <clipPath id="headin"><path d="M629,349 L628,300 C628,285 630,275 632,269 C635,258 639,249 643,241 C649,231 655,223 662,216 C670,207 678,200 687,194 C696,188 705,183 715,180 C727,176 740,174 752.500,174 C763,174 774,175 784,177 C795,180 805,184 815,190 C824,195 832,201 840,207 C848,214 856,221 862,229 C868,237 873,245 877.500,254 C882,264 885,274 887,285 C889,295 888.500,306 888.500,316 L887,338 L870,600 L640,600 Z"/></clipPath>
  <clipPath id="jawin"><path d="M627,456 C629,464 631,472 633.200,479.800 C635,487 637,495 639.800,502 C642,510 645,517 647.600,524 C651,531 655,538 659.800,544 C664,551 669,558 675.300,564 C681,570 687,576 693,581.700 C699,586 705,590 710.700,592.800 C715,595 720,597 724,598.300 C728,599.500 733,600.200 737.300,600.500 C751,601.500 766,601 780,599.400 C787,598.500 793,597 798,595 C807,590 815,584 823,578 C831,572 838,566 845,559.600 C851,554 857,548 862,542 L862,440 L627,440 Z"/></clipPath>
  <linearGradient id="jawg" gradientUnits="userSpaceOnUse" x1="0" y1="452" x2="0" y2="545"><stop offset="0" stop-color="#000" stop-opacity=".34"/><stop offset=".55" stop-color="#000" stop-opacity=".5"/><stop offset="1" stop-color="#000" stop-opacity=".64"/></linearGradient>
</defs>
<g filter="url(#dith)">
  <!-- head outline -->
  <g clip-path="url(#headin)">
    <path id="hd" d="M629,349 L628,300 C628,285 630,275 632,269 C635,258 639,249 643,241 C649,231 655,223 662,216 C670,207 678,200 687,194 C696,188 705,183 715,180 C727,176 740,174 752.500,174 C763,174 774,175 784,177 C795,180 805,184 815,190 C824,195 832,201 840,207 C848,214 856,221 862,229 C868,237 873,245 877.500,254 C882,264 885,274 887,285 C889,295 888.500,306 888.500,316 L887,338" fill="none" stroke="#000" stroke-opacity=".36" stroke-width="26" filter="url(#b3)"/>
    <path d="M629,349 L628,300 C628,285 630,275 632,269 C635,258 639,249 643,241 C649,231 655,223 662,216 C670,207 678,200 687,194 C696,188 705,183 715,180 C727,176 740,174 752.500,174 C763,174 774,175 784,177 C795,180 805,184 815,190 C824,195 832,201 840,207 C848,214 856,221 862,229 C868,237 873,245 877.500,254 C882,264 885,274 887,285 C889,295 888.500,306 888.500,316 L887,338" fill="none" stroke="#000" stroke-opacity=".15" stroke-width="44" filter="url(#b3)"/>
  </g>

  <!-- eyebrows -->
  <g filter="url(#b1)" fill="#000">
    <path d="M650.500,353 C658,344 665,337 671.600,332.600 C675,329 678,327 680.400,326.400 C686,325.500 692,325.800 698,326.400 C705,327.500 712,329 719,330 C726,331 733,332 740,332.600 L741,340.500 C734,341 726,341 719,340.500 C712,339.500 705,337 698,336 C693,335.500 688,336 684,337 C679,338.500 674,340.500 670,343 C664,347 658,351 652.300,354.500 Z" fill-opacity=".72"/>
    <path d="M776.200,334.300 C780,333 785,332.300 789.300,331.700 C798,330 807,328.500 815.700,327.300 C822,326.500 828,326 833.300,326.400 C838,328 843,331 847.300,334.300 C852,337.500 857,341 861.400,344 C864,346 867,348 869.300,350 L868.400,354.500 C862,351.500 856,348.500 850.800,345.700 C845,342.500 839,339.500 833.300,337.800 C827,338.500 821,340.500 815.700,341.400 C807,342 798,342 789.300,341.400 C785,341 780,340 776.200,338.700 Z" fill-opacity=".74"/>
  </g>
  <!-- left eye -->
  <g filter="url(#b1)">
    <path d="M665.500,377 C668,366 676,357 686,353 C698,349 716,349.500 728,354.500 C738,359 745,367 747.500,376 C748,381 747,386 745,388.500 L736,389 C737,383 735,377 731.400,372 C727,377 721,381 715.500,383 C708,387 700,389 692,388 C683,387 673,385 667,381 Z" fill="#000" fill-opacity=".36"/>
    <path d="M667,374 C671,365 677,359 684,356.300 C691,352.500 699,351 706.800,351 C714,351 722,352.500 727.800,354.500 C735,358 741,363 743.700,367.700 C740,370 736,371.500 731.400,372 C727,368 722,365.500 717.300,364.200 C712,361 707,359.500 703.200,359 C697,359 691,360 685.700,361.600 C679,365 673,370 668,375.600 Z" fill="#000" fill-opacity=".25"/>
    <path d="M667,377 C672,370 679,364.500 685.700,361.600 C691,359.500 698,358.600 703.200,359 C708,359.800 713,361.500 717.300,364.200 C722,366.500 727,369 731.400,372" fill="none" stroke="#000" stroke-opacity="1" stroke-width="3.400"/>
    <path d="M667,378 C672,371 679,366 687,362.500 L693,371 C690,376 686,380 682,382.500 C677,383 671,381.500 667,378 Z" fill="#000" fill-opacity=".5"/>
    <ellipse cx="702.400" cy="367.400" rx="9.500" ry="7.400" fill="#000" fill-opacity=".9"/>
    <path d="M672,382 C680,386 689,388 698,387 C705,386 711,383.500 715.500,380.500 C721,378 727,375 731,372.500" fill="none" stroke="#000" stroke-opacity=".55" stroke-width="3.200"/>
    <circle cx="706" cy="363.800" r="1.300" fill="#fff"/>
  </g>
  <!-- right eye -->
  <g filter="url(#b1)">
    <path d="M781,367 C783,359 790,353 800,351.500 C810,350 822,350.500 832,353 C842,356 850,363 854,371 L852.500,379 C848,384 840,388 830,388.500 C820,389 810,386.500 803,381.500 C796,377.500 790,376 784,377 Z" fill="#000" fill-opacity=".27"/>
    <path d="M783,364 C787,357 794,353 802,352 L806,364 C802,368 800,372 799,377 C794,375 788,374 784,375 Z" fill="#000" fill-opacity=".28"/>
    <path d="M800,370 C804,364.500 810,361 815.700,359.800 C819,359 823,359 826.200,359.800 C831,361 835,363.500 838.500,366 C843,369 847,372.500 850.800,375.600" fill="none" stroke="#000" stroke-opacity="1" stroke-width="4"/>
    <ellipse cx="821" cy="367.300" rx="10" ry="7.600" fill="#000" fill-opacity=".93"/>
    <path d="M798,374.700 C802,379.500 807,382.500 812,384.400 C818,386.300 824,386.800 829.700,386 C835,385 840,382.500 843.800,380 C846,378.500 849,377 850.800,375.600" fill="none" stroke="#000" stroke-opacity=".6" stroke-width="3"/>
    <path d="M806,373 C810,378 818,381 826,380 C831,379 835,376 838,372" fill="none" stroke="#000" stroke-opacity=".3" stroke-width="5"/>
    <path d="M792.800,355.400 C800,352 810,351 820,352 C832,353.500 844,358.500 852.600,369.500" fill="none" stroke="#000" stroke-opacity=".45" stroke-width="1.600"/>
    <circle cx="823" cy="363.600" r="1.300" fill="#fff"/>
  </g>
  <!-- left ear -->
  <g filter="url(#b1)" fill="none" stroke="#000">
    <path d="M607.800,351 C605.500,360 604,372 603.200,385 C602.500,398 603.500,410 606,420 C609,431 615,442 622,451 C626,455 631,458 636,459.500" stroke-opacity=".5" stroke-width="2"/>
    <path d="M607.800,351 C612,354 616,357 618.700,360.500 C622,365 625,370 626.500,376" stroke-opacity=".68" stroke-width="2.600"/>
    <path d="M625,382 C623,390 623.500,400 626,409 C628,415 630,420 632,424" stroke-opacity=".74" stroke-width="6.500"/>
    <ellipse cx="627" cy="385" rx="4" ry="4.500" fill="#000" fill-opacity=".9" stroke="none"/>
    <path d="M613,368 C610,385 611,408 617,428" stroke-opacity=".1" stroke-width="10"/>
    <path d="M618,432 C622,440 627,448 634,456" stroke-opacity=".45" stroke-width="13"/>
    <path d="M626,440 C629,447 632,452 636,457" stroke-opacity=".75" stroke-width="4.500"/>
  </g>
  <!-- right ear -->
  <g filter="url(#b1)" fill="none" stroke="#000">
    <path d="M909.700,351.400 C906,355 902,359 899,362.500 C897,366 896,370 896,374" stroke-opacity=".45" stroke-width="2.200"/>
    <path d="M893.500,381 C896,388 896.500,396 895,404 C894,412 891,421 888.700,428" stroke-opacity=".7" stroke-width="5.500"/>
    <ellipse cx="895" cy="386" rx="3.500" ry="5" fill="#000" fill-opacity=".55" stroke="none"/>
    <path d="M910.600,373 C914,380 916.500,389 917.500,398 C918,408 916,417 913,425" stroke-opacity=".38" stroke-width="1.600"/>
    <path d="M891,438 C896,441 900,444 903,446 M889,446 C893,449 896,452 898,455 M888.500,458 C890,456 892,453 895,449" stroke-opacity=".3" stroke-width="5"/>
  </g>
  <!-- nose -->
  <g filter="url(#b1)">
    <path d="M744.700,438.200 C738,441 734,444 731,447.300 C726,452 724.500,456 724.600,460 C724,464 724,468 724.600,471 C726,475 729,478 732.800,480 C737,482.500 742,484 747.400,484.700 C751,484 755,481.500 758.300,478.300 C754,475.500 751,472.500 749.200,469.200 C746,465 744.500,461 743.800,456.500 C743.500,450 744,444 744.700,438.200 Z" fill="#000" fill-opacity=".4"/>
    <path d="M739.200,467.800 C743,472 748,475.500 752.900,478.300" fill="none" stroke="#000" stroke-opacity="1" stroke-width="4.600" stroke-linecap="round"/>
    <path d="M745,483 C752,484.500 760,483.500 769,478" fill="none" stroke="#000" stroke-opacity=".55" stroke-width="3.200"/>
    <path d="M769.300,477.400 C773,475 777,472 780.200,469.200" fill="none" stroke="#000" stroke-opacity=".92" stroke-width="3.900" stroke-linecap="round"/>
    <path d="M781,473.500 L793,475" fill="none" stroke="#000" stroke-opacity=".4" stroke-width="2.400"/>
  </g>
  <!-- lips -->
  <g filter="url(#b1)">
    <path d="M710,521.200 C713,518.500 716,516.500 718.200,515.700 C723,513.500 728,512.300 732.800,512 C740,512.500 747,513.500 754.700,513.900 C762,514.200 769,514.300 776.600,514.800 C783,515 790,515.500 796.600,516.600 C801,517.500 806,519 810.300,520.300 C806,522.500 801,523.500 796.600,523.500 C785,523 774,523 763.800,523 C752,523 740,523 727.300,523.500 C721,524 715,523 710,521.200 Z" fill="#000" fill-opacity=".52"/>
    <path d="M710,521.200 C716,521 722,520.600 727.300,520.300 C733,519.800 740,519.400 745.600,519.400 C752,519.500 758,520 763.800,520.300 C770,520.200 776,519.600 782,519.400 C787,519.800 792,520.600 796.600,521.200 C801,521 806,520.600 810,520.300" fill="none" stroke="#000" stroke-opacity=".6" stroke-width="2.400"/>
    <path d="M711,523 C712,526 712.500,528 712.800,529.400 C717,533 722,536 727.300,538.500 C733,541.500 739,543.500 745.600,544 C752,544.500 758,544.500 763.800,544 C769,542.500 773,541 776.600,538.500 C780,536 783,533 785.700,529.400 C788,527 790,525 792,523 Z M752,531.500 a10,4 0 1,0 20,0 a10,4 0 1,0 -20,0 Z" fill-rule="evenodd" fill="#000" fill-opacity=".48"/>
        <path d="M724,538 C731,542 739,544.500 748,545 C757,545.500 768,544 776,540" fill="none" stroke="#000" stroke-opacity=".5" stroke-width="3.600"/>
    <path d="M714,525 C718,531 724,535 731,537" fill="none" stroke="#000" stroke-opacity=".3" stroke-width="7"/>
  </g>
  <!-- jaw -->
  <g clip-path="url(#jawin)">
    <path d="M627,456 C629,464 631,472 633.200,479.800 C635,487 637,495 639.800,502 C642,510 645,517 647.600,524 C651,531 655,538 659.800,544 C664,551 669,558 675.300,564 C681,570 687,576 693,581.700 C699,586 705,590 710.700,592.800 C715,595 720,597 724,598.300 C728,599.500 733,600.200 737.300,600.500" fill="none" stroke="url(#jawg)" stroke-width="27" filter="url(#b3)"/>
    <path d="M724,598.300 C728,599.500 733,600.200 737.300,600.500 C751,601.500 766,601 780,599.400 C787,598.500 793,597 798,595 C807,590 815,584 823,578 C831,572 838,566 845,559.600 C851,554 857,548 862,542" fill="none" stroke="#000" stroke-opacity=".6" stroke-width="17" filter="url(#b3)"/>
    <g filter="url(#b1)" fill="none" stroke="#000">
      <path d="M645,517 C651,531 655,538 659.800,544 C664,551 669,558 675.300,564" stroke-opacity=".75" stroke-width="9"/>
      <path d="M668,555 C671,559 673,562 675.300,564 C681,570 687,576 693,581.700 C699,586 705,590 710.700,592.800 C715,595 720,597 724,598.300" stroke-opacity="1" stroke-width="13"/>
      <path d="M716,595.500 C720,597 722,597.800 724,598.300 C728,599.500 733,600.200 737.300,600.500 C751,601.500 766,601 780,599.400 C787,598.500 793,597 798,595" stroke-opacity="1" stroke-width="15"/>
      <path d="M792,597 C800,594 807,590 815,584 C818,582 821,580 823,578 C827,575 831,572 834,569" stroke-opacity=".95" stroke-width="9.500"/>
      <path d="M830,572 C838,566 842,562 845,559.600 C849,556 852,553 855,550" stroke-opacity=".55" stroke-width="6"/>
    </g>
  </g>
</g>
</svg>


  <!-- right panel -->
  <div class="lbl" style="left:1213px;top:8px">Hi, anonymous!</div>
  <div class="btn" style="left:1338px;top:5px;width:23px;height:22px"><span>?</span></div>
  <div class="btn lt" style="left:1211px;top:33px;width:150px"><span>crop background</span></div>
  <div class="abs cb1" style="left:1211px;top:62px"></div>
  <div class="lbl dim" style="left:1232px;top:64px">show crop area</div>
  <div class="btn" style="left:1211px;top:85px;width:150px"><span>clear all</span></div>
  <div class="btn" style="left:1211px;top:113px;width:150px"><span>duplicate this</span></div>
  <div class="btn" style="left:1211px;top:141px;width:150px"><span>save face</span></div>
  <div class="btn" style="left:1211px;top:169px;width:150px"><span>load face</span></div>
  <div class="btn" style="left:1211px;top:208px;width:150px"><span>snapshot</span></div>
  <div class="btn lt" style="left:1211px;top:236px;width:150px"><span>this face on Web</span></div>
  <div class="btn" style="left:1211px;top:264px;width:150px"><span>print face</span></div>
  <div class="lbl" style="left:1235px;top:323px">Load background:</div>
  <div class="abs" style="left:1211px;top:344px;width:121px;height:22px;background:#fff;border:1px solid #dfe3e8"></div>
  <div class="btn" style="left:1332px;top:344px;width:29px;height:22px;line-height:16px"><span>...</span></div>
  <div class="abs cb2" style="left:1216px;top:373px"></div>
  <div class="lbl dim" style="left:1237px;top:375px">use as background</div>
  <div class="sl" style="left:1224px;top:406px;width:127px"></div>
  <div class="tri" style="left:1281px;top:402px"></div>
  <div class="lbl" style="left:1237px;top:423px">Background scale</div>
  <div class="sl" style="left:1224px;top:454px;width:127px"></div>
  <div class="tri" style="left:1345px;top:450px"></div>
  <div class="lbl" style="left:1231px;top:471px">Background opacity</div>
  <div class="btn lt" style="left:1240px;top:492px;width:91px"><span>clear image</span></div>
  <div class="btn big" style="left:1251px;top:526px;width:70px;height:65px;line-height:62px"><span>LOGIN</span></div>
  <div class="btn" style="left:1251px;top:597px;width:70px"><span>register</span></div>

  <!-- bottom-left controls -->
  <div class="lbl" style="left:45px;top:490px">Scaling</div>
  <div class="lbl" style="left:162px;top:490px">Opacity</div>
  <div class="sl v" style="left:118px;top:516px;width:2px;height:86px"></div>
  <div class="tril" style="left:113px;top:598px"></div>
  <div class="sl" style="left:141px;top:521px;width:90px"></div>
  <div class="tri" style="left:222px;top:517px"></div>
  <div class="btn" style="left:133px;top:535px;width:100px"><span>Delete</span></div>
  <div class="btn" style="left:133px;top:563px;width:100px"><span>Undo Scaling</span></div>
  <div class="btn" style="left:15px;top:595px;width:20px;height:20px"></div>
  <div class="sl" style="left:17px;top:617px;width:87px"></div>
  <div class="tri" style="left:20px;top:614px;border-bottom-width:10px"></div>
</div>
<div id="taskbar">
  <div class="abs" style="left:0;top:0;width:110px;height:40px;background:linear-gradient(90deg,rgba(120,138,168,.97) 0,rgba(128,148,178,.9) 42px,rgba(146,170,202,.5) 68px,rgba(170,200,232,0) 98px)"></div>
  <div class="abs" style="left:1055px;top:0;width:311px;height:40px;background:linear-gradient(90deg,rgba(139,161,190,0) 0,rgba(139,161,190,.5) 15px,rgba(139,161,190,1) 36px,rgba(139,161,190,1) 100%)"></div>
  <div class="abs" style="left:0;top:0;width:1366px;height:1px;background:rgba(255,255,255,.35)"></div>
  <!-- start orb -->
  <svg class="abs" style="left:7px;top:0px" width="40" height="40" viewBox="0 0 40 40">
    <defs>
      <radialGradient id="orb" cx=".5" cy=".95" r=".95"><stop offset="0" stop-color="#5fe0ff"/><stop offset=".3" stop-color="#1c8fd6"/><stop offset=".62" stop-color="#164f94"/><stop offset="1" stop-color="#1b3868"/></radialGradient>
      <linearGradient id="orbg" x1="0" y1="0" x2="0" y2="1"><stop offset="0" stop-color="#fff" stop-opacity=".5"/><stop offset="1" stop-color="#fff" stop-opacity=".05"/></linearGradient>
    </defs>
    <circle cx="20" cy="20" r="18.300" fill="url(#orb)" stroke="#24486f" stroke-width="1"/>
    <path d="M3.500 17a16.500 16.500 0 0 1 33 0c-8 3.500-25 3.500-33 0z" fill="url(#orbg)"/>
    <path d="M10.800 13.200c2.600-1.400 5-1.600 7.600-.2l-1.600 6c-2.500-1.300-4.800-1.200-7.600.2z" fill="#f2622a"/>
    <path d="M19.800 13.600c2.600 1.300 5.200 1.300 8-.2l-1.700 6c-2.700 1.500-5.200 1.500-7.900.2z" fill="#8cc63f"/>
    <path d="M8.800 20.600c2.700-1.400 5.100-1.500 7.600-.2l-1.600 6c-2.500-1.300-4.900-1.200-7.600.2z" fill="#3aa0e8"/>
    <path d="M17.800 21c2.600 1.300 5.200 1.300 7.900-.2l-1.600 6c-2.700 1.500-5.300 1.500-7.900.2z" fill="#fbc21c"/>
  </svg>
  <!-- media player -->
  <svg class="abs" style="left:74px;top:7px" width="30" height="27" viewBox="0 0 30 27">
    <path d="M22 1.500l5 .8v20.500l-5 1.200z" fill="#c8dcf0" stroke="#7fa6cf" stroke-width=".8"/>
    <rect x="1.500" y="1.500" width="21" height="22.500" fill="#a9cdee" stroke="#6d9ccc" stroke-width="1"/>
    <rect x="3" y="3" width="18" height="19.500" fill="#cfe3f6" opacity=".7"/>
    <circle cx="11.800" cy="12.500" r="8.300" fill="#f58a1f" stroke="#e06a0a" stroke-width=".8"/>
    <path d="M8.800 7.500l8 5-8 5z" fill="#fff"/>
  </svg>
  <!-- explorer -->
  <svg class="abs" style="left:134px;top:5px" width="34" height="31" viewBox="0 0 34 31">
    <path d="M2 4h9l2 2h18v20H2z" fill="#f4dc8a" stroke="#d2b257" stroke-width="1"/>
    <rect x="4" y="1.500" width="4" height="2.400" fill="#22b14c"/><rect x="12.500" y="3.500" width="3.500" height="2.400" fill="#e03a2a"/><rect x="21" y="5.500" width="3.500" height="2.400" fill="#2a8ae0"/>
    <path d="M1.500 9h31v16.500h-31z" fill="#f8e6a2" stroke="#d9bb63" stroke-width="1"/>
    <path d="M1.500 9h31v6h-31z" fill="#fbeeb8"/>
    <path d="M6 29.500V20.500a2.500 2.500 0 0 1 2.500-2.500h17a2.500 2.500 0 0 1 2.500 2.500v9h-5.500v-6h-11v6z" fill="#8ec8ef" stroke="#3e8fce" stroke-width="1.200"/>
    <path d="M7.500 21a2 2 0 0 1 2-2h15a2 2 0 0 1 2 2v1.500h-19z" fill="#c3e4fa"/>
  </svg>
  <!-- chrome button -->
  <div class="abs" style="left:239px;top:1px;width:4px;height:39px;border:1px solid #8394ad;border-left:none;background:#cbdaee;border-radius:0 2px 2px 0"></div>
  <div class="abs" style="left:184px;top:0px;width:54px;height:40px;border:1px solid #7c8ea8;border-radius:3px;background:linear-gradient(#e2ebf6 0,#d4e0f0 48%,#c3d3e8 52%,#cfdcee 100%);box-shadow:inset 0 0 0 1px rgba(255,255,255,.7)"></div>
  <svg class="abs" style="left:195px;top:5px" width="30" height="30" viewBox="0 0 30 30">
    <circle cx="15" cy="15" r="14" fill="#fbc116"/>
    <path d="M15 15L2.900 8A14 14 0 0 1 27.100 8z" fill="#e43e2b"/>
    <path d="M15 15L2.900 8A14 14 0 0 0 15 29l6.100-10.500z" fill="#36a852" />
    <path d="M2.900 8A14 14 0 0 1 27.100 8H15z" fill="#e43e2b"/>
    <path d="M27.100 8A14 14 0 0 1 15 29l6.100-10.500A7 7 0 0 0 15 8z" fill="#fbc116"/>
    <path d="M2.900 8A14 14 0 0 0 15 29l6.100-10.500a7 7 0 0 1-12.200 0z" fill="#36a852"/>
    <circle cx="15" cy="15" r="6.600" fill="#f4f6f8"/><circle cx="15" cy="15" r="5.300" fill="#4a8af4"/>
  </svg>
  <!-- opera -->
  <svg class="abs" style="left:260px;top:4px" width="30" height="32" viewBox="0 0 30 32">
    <defs><linearGradient id="opg" x1="0" y1="0" x2="0" y2="1"><stop offset="0" stop-color="#f0463a"/><stop offset=".5" stop-color="#d2161a"/><stop offset="1" stop-color="#8c0b10"/></linearGradient></defs>
    <path fill-rule="evenodd" d="M15 1C7 1 1.500 7.500 1.500 16S7 31 15 31s13.500-6.500 13.500-15S23 1 15 1zm0 4.500c3.600 0 5 4.500 5 10.500s-1.400 10.500-5 10.500-5-4.500-5-10.500 1.400-10.500 5-10.500z" fill="url(#opg)" stroke="#7a0a0e" stroke-width=".6"/>
  </svg>
  <!-- window button -->
  <div class="abs" style="left:308px;top:0;width:58px;height:40px;border:1px solid #8a9db8;border-radius:3px;background:linear-gradient(#c3d8f0 0,#b9d1ec 48%,#a9c5e5 52%,#b3cdea 100%);box-shadow:inset 0 0 0 1px rgba(255,255,255,.45)"></div>
  <svg class="abs" style="left:321px;top:6px" width="31" height="27" viewBox="0 0 31 27">
    <rect x=".800" y=".800" width="29.400" height="24.600" rx="1" fill="#fffef8" stroke="#1f4fb0" stroke-width="1.600"/>
    <rect x=".800" y=".800" width="29.400" height="3.600" fill="#2a62c8"/>
    <rect x="25.500" y="1.600" width="3" height="2.200" fill="#e0643a"/><rect x="21.500" y="1.600" width="3" height="2.200" fill="#7aa2e6"/>
    <path d="M1 26.300h29.500" stroke="#3a4a66" stroke-width="1" opacity=".6"/>
  </svg>
  <!-- skype button -->
  <div class="abs" style="left:370px;top:0;width:59px;height:40px;border:1px solid #8a9db8;border-radius:3px;background:linear-gradient(#c3d8f0 0,#b9d1ec 48%,#a9c5e5 52%,#b3cdea 100%);box-shadow:inset 0 0 0 1px rgba(255,255,255,.45)"></div>
  <svg class="abs" style="left:383px;top:3px" width="32" height="34" viewBox="0 0 32 34">
    <circle cx="10" cy="10.500" r="8.500" fill="#12a5e6"/><circle cx="22" cy="23.500" r="8.500" fill="#12a5e6"/><circle cx="16" cy="17" r="12.800" fill="#12a5e6"/>
    <path d="M21.300 11.800c-1-1.700-3-2.600-5.300-2.600-2.900 0-5 1.500-5 3.800 0 5 8.300 3 8.300 6.600 0 1.400-1.400 2.300-3.300 2.300-2.200 0-3.800-1-4.600-2.900" fill="none" stroke="#fff" stroke-width="3.400" stroke-linecap="round"/>
  </svg>
  <!-- tray -->
  <div class="tray" style="left:1110px;top:11px;font-size:11px;color:#e6ebf2">UK</div>
  <svg class="abs" style="left:1131px;top:9px" width="17" height="16" viewBox="0 0 17 16">
    <path d="M8 6c0-3 2-2.500 3.500-3.500S13.500 .500 14 .500" fill="none" stroke="#d0d4da" stroke-width="1"/>
    <rect x=".800" y="5.800" width="15.400" height="9" rx="1.500" fill="#c9ccd2" stroke="#7d8796" stroke-width="1"/>
    <path d="M3 8.500h11M3 10.500h11M4.500 12.500h8" stroke="#7d8796" stroke-width="1" stroke-dasharray="1.200 .8"/>
  </svg>
  <svg class="abs" style="left:1158px;top:17px" width="11" height="6" viewBox="0 0 11 6"><path d="M5.500 .300L10.500 5.500H.500z" fill="#fff" stroke="#7e8fa8" stroke-width=".5"/></svg>
  <svg class="abs" style="left:1179px;top:11px" width="18" height="18" viewBox="0 0 18 18">
    <path d="M1 3.500l7-1.200v6.200H1zM9 2.100l8-1.300v7.700H9zM1 9.500h7v6.200l-7-1.200zM9 9.500h8v7.700l-8-1.300z" fill="#fff" stroke="#4a5466" stroke-width=".8"/>
  </svg>
  <svg class="abs" style="left:1203px;top:11px" width="18" height="18" viewBox="0 0 18 18">
    <rect x="5.500" y="4.500" width="11.500" height="9" fill="#9fb0c8" stroke="#2b3340" stroke-width="1.600"/><rect x="5.500" y="4.500" width="11.500" height="9" fill="none" stroke="#fff" stroke-width=".6"/>
    <path d="M8 16.500h7M11.500 13.500v3" stroke="#2b3340" stroke-width="1.800"/>
    <path d="M3.500 .500v4M1.500 2v3.500a2 2 0 0 0 4 0V2M3.500 7.500V16" fill="none" stroke="#2b3340" stroke-width="2.400"/>
    <path d="M3.500 .500v4M1.500 2v3.500a2 2 0 0 0 4 0V2M3.500 7.500V16" fill="none" stroke="#fff" stroke-width="1"/>
  </svg>
  <svg class="abs" style="left:1227px;top:11px" width="18" height="18" viewBox="0 0 18 18">
    <rect x="1.500" y="3.500" width="8" height="13" rx="1.500" fill="#fff" stroke="#2b3340" stroke-width="1.500"/><rect x="3.500" y="1.500" width="4" height="2" fill="#fff" stroke="#2b3340" stroke-width="1"/>
    <path d="M9.500 1v4M14.500 1v4" stroke="#2b3340" stroke-width="2.600"/><path d="M9.500 1v4M14.500 1v4" stroke="#fff" stroke-width="1.200"/>
    <path d="M7.500 5h9v3a4.500 4.500 0 0 1-3 4v4.500h-3V12a4.500 4.500 0 0 1-3-4z" fill="#fff" stroke="#2b3340" stroke-width="1.300"/>
  </svg>
  <svg class="abs" style="left:1252px;top:12px" width="16" height="16" viewBox="0 0 19 19">
    <circle cx="6.500" cy="6.500" r="5" fill="#6fb21f"/><circle cx="12.500" cy="12.500" r="5" fill="#6fb21f"/><circle cx="9.500" cy="9.500" r="7.200" fill="#6fb21f"/>
    <path d="M6 9.800l2.600 2.600 4.600-5" fill="none" stroke="#fff" stroke-width="2.200"/>
  </svg>
  <div class="tray" style="left:1299px;top:5px;font-size:12px;letter-spacing:-.3px">11:29</div>
  <div class="tray" style="left:1286px;top:22px;font-size:12px;letter-spacing:-.65px">28.07.2015</div>
  <div class="abs" style="left:1352px;top:1px;width:14px;height:39px;border:1px solid #6f839f;border-right:none;background:linear-gradient(135deg,#9fb6d4 0,#b9cde6 40%,#8fa8c9 60%,#a9c0dd 100%);box-shadow:inset 1px 1px 0 rgba(255,255,255,.5)"></div>
</div>

</body>
</html>
